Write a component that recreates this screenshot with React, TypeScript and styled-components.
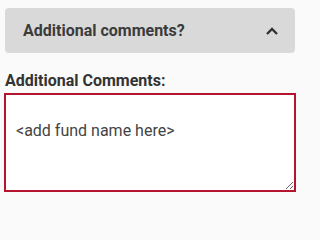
import React from 'react';
import styled, { createGlobalStyle } from 'styled-components';

const GlobalStyle = createGlobalStyle`
  html, body {
    margin: 0;
    padding: 0;
    background: #fafafa;
    font-family: Roboto, 'Liberation Sans', sans-serif;
  }
`;

const Page = styled.div`
  width: 290px;
  padding: 8px 5px 0 5px;
  display: flex;
  flex-direction: column;
`;

const AccordionHeader = styled.div`
  height: 45px;
  background: #d9d9d9;
  border-radius: 4px;
  display: flex;
  align-items: center;
  justify-content: space-between;
  padding: 0 16px 0 18px;
`;

const HeaderTitle = styled.span`
  font-size: 16px;
  font-weight: 700;
  color: #3b3b3b;
`;

const Chevron = styled.svg`
  width: 14px;
  height: 14px;
  display: block;
`;

const Label = styled.label`
  margin-top: 18px;
  font-size: 16px;
  font-weight: 700;
  color: #333;
  line-height: 20px;
`;

const CommentBox = styled.textarea`
  margin: 2px -1px 0 -1px;
  height: 99px;
  box-sizing: border-box;
  border: 2px solid #b5132e;
  background: #fff;
  padding: 26px 10px 10px;
  font-family: Roboto, 'Liberation Sans', sans-serif;
  font-size: 16px;
  color: #444;
  resize: vertical;
  outline: none;
`;

export default function App() {
  return (
    <>
      <GlobalStyle />
      <Page>
        <AccordionHeader>
          <HeaderTitle>Additional comments?</HeaderTitle>
          <Chevron viewBox="0 0 14 14">
            <path d="M2 10 L7 5 L12 10" fill="none" stroke="#333" strokeWidth="2.4" />
          </Chevron>
        </AccordionHeader>
        <Label>Additional Comments:</Label>
        <CommentBox defaultValue="<add fund name here>" />
      </Page>
    </>
  );
}
